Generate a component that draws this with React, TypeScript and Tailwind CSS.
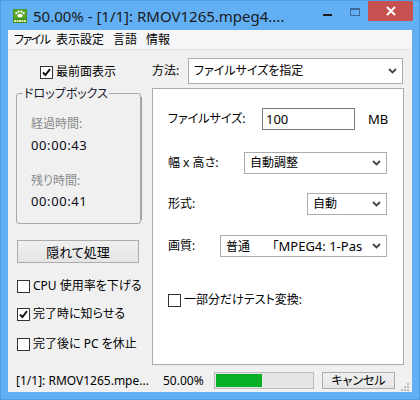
import React from "react";

const Check = ({ checked }: { checked?: boolean }) => (
  <div className="w-[13px] h-[13px] border border-[#333] bg-white flex items-center justify-center shrink-0">
    {checked && (
      <svg width="11" height="11" viewBox="0 0 11 11">
        <path d="M2 5.5 L4.4 8 L9 2.2" fill="none" stroke="#111" strokeWidth="1.9" />
      </svg>
    )}
  </div>
);

const Chevron = () => (
  <svg width="9" height="6" viewBox="0 0 9 6" className="shrink-0">
    <path d="M1 1 L4.5 4.5 L8 1" fill="none" stroke="#444" strokeWidth="1.8" />
  </svg>
);

const Combo = ({ w, h, children }: { w: string; h: string; children: React.ReactNode }) => (
  <div className={`${w} ${h} border border-[#acacac] bg-white flex items-center pl-[5px] pr-[5px]`}>
    <div className="flex-1 whitespace-nowrap mr-[6px]">{children}</div>
    <Chevron />
  </div>
);

const CheckRow = ({ checked, label, cls }: { checked?: boolean; label: string; cls: string }) => (
  <div className={`${cls} h-[16px] flex items-center gap-[3px]`}>
    <Check checked={checked} />
    <span className="whitespace-nowrap">{label}</span>
  </div>
);

const PawIcon = () => (
  <svg width="14" height="14" viewBox="0 0 14 14">
    <rect x="0" y="0" width="14" height="14" fill="#3f8a1c" />
    <rect x="0.5" y="0.5" width="13" height="9" fill="#5aa62c" />
    <ellipse cx="7" cy="6.6" rx="2.6" ry="1.9" fill="#fff" />
    <circle cx="3.4" cy="4.2" r="1.1" fill="#fff" />
    <circle cx="5.6" cy="2.6" r="1.1" fill="#fff" />
    <circle cx="8.4" cy="2.6" r="1.1" fill="#fff" />
    <circle cx="10.6" cy="4.2" r="1.1" fill="#fff" />
    <rect x="1" y="11" width="2" height="2" fill="#e6f3a8" />
    <rect x="3.5" y="11" width="2" height="2" fill="#e6f3a8" />
    <rect x="6" y="11" width="2" height="2" fill="#e6f3a8" />
    <rect x="8.5" y="11" width="2" height="2" fill="#e6f3a8" />
    <rect x="11" y="11" width="2" height="2" fill="#e6f3a8" />
  </svg>
);

const App = () => {
  const progress = 48;

  return (
    <div className="w-[420px] h-[400px] bg-[#62aff3] border border-[#4f9de4] flex flex-col font-['Noto_Sans','Noto_Sans_CJK_JP',sans-serif] [font-feature-settings:'palt'] text-[12px] text-black leading-[16px]">
      {/* title bar */}
      <div className="h-[29px] flex items-start pl-[12px] pr-[6px] shrink-0">
        <div className="self-center mt-[1px]">
          <PawIcon />
        </div>
        <div className="self-center flex-1 ml-[6px] text-[15px] leading-[20px] text-[#1b1b1b] whitespace-nowrap">
          50.00% - [1/1]: RMOV1265.mpeg4....
        </div>
        <div className="w-[27px] h-[20px] flex items-center justify-center">
          <div className="w-[9px] h-[2px] bg-[#1e1e1e] mt-[7px]" />
        </div>
        <div className="w-[27px] h-[20px] flex items-center justify-center">
          <div className="w-[10px] h-[8px] border border-t-2 border-[#3d6b97] mt-[2px]" />
        </div>
        <div className="w-[45px] h-[20px] bg-[#c75050] flex items-center justify-center">
          <svg width="10" height="10" viewBox="0 0 10 10">
            <path d="M1 1 L9 9 M9 1 L1 9" stroke="#fff" strokeWidth="2" />
          </svg>
        </div>
      </div>

      {/* client */}
      <div className="mx-[7px] h-[362px] bg-[#f0f0f0] flex flex-col">
        {/* menu */}
        <div className="h-[20px] bg-[#f5f6f7] border-b border-[#e3e3e3] flex items-center pl-[6px] shrink-0">
          <span className="w-[42px] shrink-0 tracking-[-1.5px]">ファイル</span>
          <span className="w-[57px] shrink-0">表示設定</span>
          <span className="w-[33px] shrink-0">言語</span>
          <span className="shrink-0">情報</span>
        </div>

        <div className="h-[315px] flex shrink-0">
          {/* left column */}
          <div className="w-[133px] flex flex-col shrink-0">
            <CheckRow checked label="最前面表示" cls="mt-[14px] ml-[32px]" />

            <div className="relative mt-[13px] ml-[8px] w-[125px] h-[131px] border border-[#a9a9a9] rounded-[3px] pl-[14px] pt-[22px]">
              <span className="absolute left-[6px] -top-[8px] bg-[#f0f0f0] px-[1px] text-[#1b2030] whitespace-nowrap">
                ドロップボックス
              </span>
              <div className="text-[#8a8a8a]">経過時間:</div>
              <div className="mt-[5px] text-[13px] tracking-[0.6px] text-[#0a0a1a]">00:00:43</div>
              <div className="mt-[20px] text-[#8a8a8a]">残り時間:</div>
              <div className="mt-[4px] text-[13px] tracking-[0.6px] text-[#0a0a1a]">00:00:41</div>
            </div>

            <div className="mt-[16px] ml-[9px] w-[122px] h-[23px] border border-[#acacac] bg-gradient-to-b from-[#f0f0f0] to-[#e5e5e5] flex items-center justify-center text-[13px]">
              隠れて処理
            </div>

            <CheckRow label="CPU 使用率を下げる" cls="mt-[15px] ml-[9px]" />
            <CheckRow checked label="完了時に知らせる" cls="mt-[12px] ml-[9px]" />
            <CheckRow label="完了後に PC を休止" cls="mt-[14px] ml-[9px]" />
          </div>

          {/* splitter line */}
          <div className="w-px h-[123px] mt-[47px] bg-[#a0a0a0] shrink-0" />

          {/* right column */}
          <div className="ml-[10px] w-[252px] flex flex-col">
            <div className="mt-[8px] h-[26px] flex items-center">
              <span className="w-[36px]">方法:</span>
              <Combo w="w-[215px]" h="h-[26px]">ファイルサイズを指定</Combo>
            </div>

            <div className="mt-[4px] h-[277px] border border-[#acacac] bg-white flex flex-col pl-[15px]">
              <div className="mt-[19px] h-[22px] flex items-center">
                <span className="w-[94px]">ファイルサイズ:</span>
                <div className="w-[93px] h-[22px] border border-[#7a7a7a] bg-white flex items-center pl-[3px] text-[13px]">
                  100
                </div>
                <span className="ml-[13px] text-[13px]">MB</span>
              </div>

              <div className="mt-[22px] h-[22px] flex items-center">
                <span className="w-[76px] whitespace-nowrap">幅 x 高さ:</span>
                <Combo w="w-[143px]" h="h-[22px]">自動調整</Combo>
              </div>

              <div className="mt-[19px] h-[22px] flex items-center">
                <span className="w-[139px]">形式:</span>
                <Combo w="w-[80px]" h="h-[22px]">自動</Combo>
              </div>

              <div className="mt-[20px] h-[22px] flex items-center">
                <span className="w-[52px]">画質:</span>
                <Combo w="w-[167px]" h="h-[22px]">
                  <span className="inline-block w-[46px]">普通</span>
                  <span className="text-[13px]">「MPEG4: 1-Pas</span>
                </Combo>
              </div>

              <CheckRow label="一部分だけテスト変換:" cls="mt-[35px]" />
            </div>
          </div>
        </div>

        {/* status bar */}
        <div className="mt-[7px] h-[17px] flex items-center pl-[8px] shrink-0">
          <span className="w-[147px] whitespace-nowrap">[1/1]: RMOV1265.mpe...</span>
          <span className="w-[51px]">50.00%</span>
          <div className="w-[100px] h-[17px] border border-[#bcbcbc] bg-[#e6e6e6] p-px">
            <div className="h-full bg-[#06b025]" style={{ width: `${progress}%` }} />
          </div>
          <div className="ml-[8px] w-[73px] h-[17px] border border-[#acacac] bg-gradient-to-b from-[#f0f0f0] to-[#e5e5e5] flex items-center justify-center">
            キャンセル
          </div>
          <svg width="10" height="10" viewBox="0 0 10 10" className="ml-[5px] self-end mb-[-3px]">
            <rect x="7" y="1" width="2" height="2" fill="#bdbdbd" />
            <rect x="4" y="4" width="2" height="2" fill="#bdbdbd" />
            <rect x="7" y="4" width="2" height="2" fill="#bdbdbd" />
            <rect x="1" y="7" width="2" height="2" fill="#bdbdbd" />
            <rect x="4" y="7" width="2" height="2" fill="#bdbdbd" />
            <rect x="7" y="7" width="2" height="2" fill="#bdbdbd" />
          </svg>
        </div>
      </div>
    </div>
  );
};

export default App;
